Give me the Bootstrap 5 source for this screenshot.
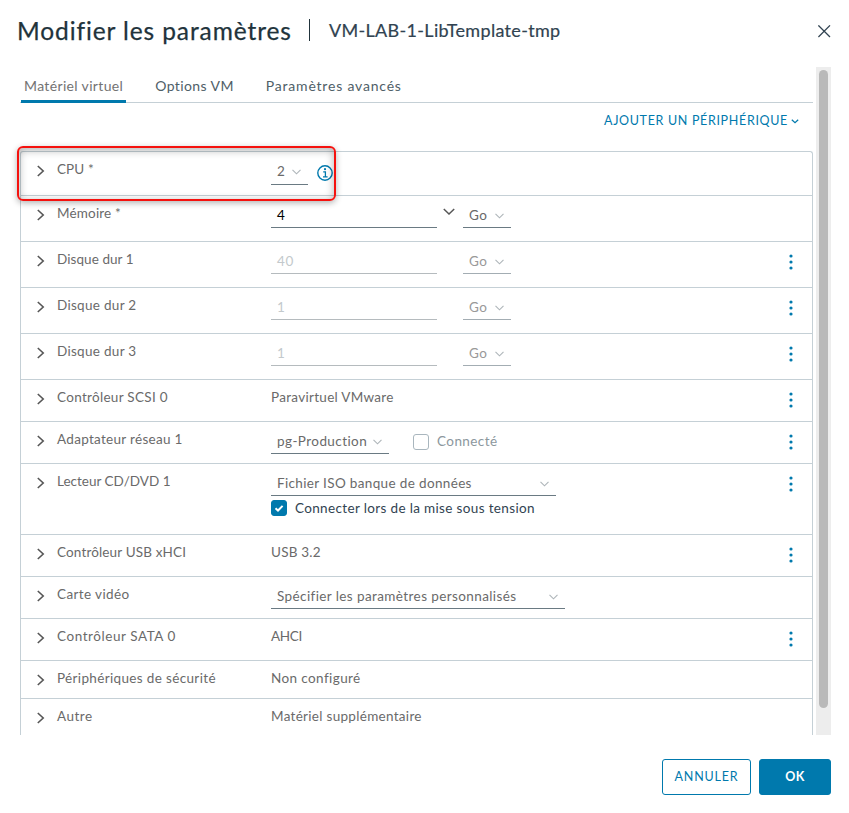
<!DOCTYPE html>
<html lang="fr">
<head>
<meta charset="utf-8">
<meta name="viewport" content="width=device-width, initial-scale=1">
<title>Modifier les paramètres</title>
<link rel="stylesheet" href="https://cdn.jsdelivr.net/npm/bootstrap@5.3.0/dist/css/bootstrap.min.css">
<style>
body{font-family:Lato,"Liberation Sans",sans-serif;font-size:13.5px;line-height:20px;color:#6a6a6a;background:#fff;overflow:hidden}
svg{display:block;fill:none;flex:none}
.dialog{width:849px;height:813px}
.dlg-head{height:67px;padding:0 18px 0 17px;color:#21333b}
.dlg-title{font-size:24.5px;line-height:30px;letter-spacing:.9px;margin:0;width:292px;padding-top:16px;font-weight:400;-webkit-text-stroke:.25px}
.dlg-sep{width:1px;height:22px;margin-top:19px;background:#21333b}
.dlg-vm{font-size:18px;line-height:24px;margin:18px 0 0 19px;letter-spacing:.32px;color:#314351;-webkit-text-stroke:.2px}
.dlg-close{margin-top:25px;border:0;background:none;padding:0}
.dlg-body{height:668px;padding-left:20px}
.pane{width:793px}
.tabs{height:36px;border-bottom:1px solid #c5d0d6;font-size:14px;padding-left:1px;gap:26px}
.tabs .nav-link{color:#4f6068;padding:9px 3px 0;height:36px;white-space:nowrap;border:0;border-bottom:3px solid transparent}
.tabs .nav-link.active{color:#737373;border-color:#0079ad}
.add-device{height:48px;padding:8px 13px 0 0;font-size:12.5px;color:#0079ad;gap:2px}
.add-device svg{margin:8px 1px 0 1px}
.devices{height:584px;border:1px solid #c5d0d6;border-width:1px 1px 0;border-radius:3px 3px 0 0}
.device{border-top:1px solid #c5d0d6;height:42px;padding-left:16px}
.device:first-child{border-top:0;height:43px}
.device.tall{height:46px}.device.cd{height:71px}.device.short{height:38px}
.caret{margin-top:13px}
.name{width:214px;margin-left:12px;padding-top:7px}
.value{padding-top:7px}
.pick{height:32px;padding:9px 7px 0 6px;border-bottom:1px solid #6a7a83;white-space:nowrap}
.first .pick{height:33px}
.pick svg{margin-top:8px;stroke:#aeb5b9}
.pick.off{color:#999;border-color:#a3adb3}
.w-cpu{width:37px}.w-go{width:48px}.w-net{width:118px}.w-iso{width:285px}.w-gpu{width:294px}
.num{width:166px;height:32px;padding:9px 6px 0;border-bottom:1px solid #6a7a83;color:#000}
.num.off{color:#c3c9cc;border-color:#b5bbbe}
.num-arrow{width:26px;padding:12px 0 0 6px}
.tick{width:16px;height:16px;border:1px solid #a9b6be;border-radius:3px}
.tick.on{background:#0079ad;border-color:#0079ad}
.net-check{padding-top:9px}
.net-check .tick{margin-top:3px}
.muted-label{color:#8c979d}
.boot-label{color:#314351;margin-top:-2px}
.kebab{margin:12px 19px 0 auto;fill:#0079ad}
.info{margin:13px 0 0 9px}
.callout-box{position:absolute;left:-3px;top:79px;width:319px;height:55px;border:2px solid #f5110e;border-radius:6px;box-shadow:0 2px 6px rgba(0,0,0,.3),inset 0 2px 8px rgba(0,0,0,.32)}
.track{width:15px;margin-left:3px;padding:3px 3px 0;background:#ededed}
.thumb{height:638px;border-radius:5px;background:#b9b9b9}
.dlg-foot{padding:24px 18px 0 0;gap:8px}
.dlg-foot .btn{height:36px;font-size:12.5px;line-height:20px;border-radius:3px;padding:7px 0;border-color:#0079ad;color:#0079ad}
.dlg-foot .cancel{width:89px}.dlg-foot .ok{width:72px;background:#0079ad;color:#fff;font-weight:700}
.s-15{letter-spacing:-.3px}.s0{letter-spacing:0}.s5{letter-spacing:.07px}.s10{letter-spacing:.1px}.s15{letter-spacing:.17px}.s20{letter-spacing:.15px}.s25{letter-spacing:.2px}.s30{letter-spacing:.3px}.s35{letter-spacing:.3px}.s40{letter-spacing:.35px}.s45{letter-spacing:.4px}.s50{letter-spacing:.42px}.s60{letter-spacing:.56px}.s70{letter-spacing:.5px}.s75{letter-spacing:.67px}.s80{letter-spacing:.8px}
</style>
</head>
<body>
<svg width="0" height="0" class="position-absolute">
<symbol id="right" viewBox="0 0 8 12"><path d="M.8 1l5.400 5L.8 11" stroke="#565656" stroke-width="1.6"/></symbol>
<symbol id="down" viewBox="0 0 9 6"><path d="M.5 .8l4 4 4-4" stroke-width="1.1"/></symbol>
<symbol id="dots" viewBox="0 0 4 16"><circle cx="2" cy="2" r="1.6"/><circle cx="2" cy="8" r="1.6"/><circle cx="2" cy="14" r="1.6"/></symbol>
</svg>
<main class="dialog d-flex flex-column">
<header class="dlg-head d-flex align-items-start">
<h1 class="dlg-title text-nowrap">Modifier les paramètres</h1><span class="dlg-sep"></span><span class="dlg-vm">VM-LAB-1-LibTemplate-tmp</span>
<button class="dlg-close ms-auto" aria-label="Fermer"><svg width="13" height="13"><path d="M.4 .4l11.600 11.600M12 .4L.4 12" stroke="#314351" stroke-width="1.3"/></svg></button>
</header>
<section class="dlg-body d-flex">
<div class="pane position-relative">
<nav class="nav tabs flex-nowrap"><a class="nav-link active s40">Matériel virtuel</a><a class="nav-link s45">Options VM</a><a class="nav-link s80">Paramètres avancés</a></nav>
<div class="add-device d-flex justify-content-end"><span class="s75">AJOUTER UN PÉRIPHÉRIQUE</span><svg width="8" height="5"><path d="M.8 .8L4 3.8 7.200 .8" stroke="#0079ad" stroke-width="1.2"/></svg></div>
<div class="devices">
<div class="device first d-flex align-items-start"><svg class="caret" width="8" height="12"><use href="#right"/></svg><div class="name s10">CPU *</div><div class="pick w-cpu d-flex justify-content-between"><span>2</span><svg width="9" height="6"><use href="#down"/></svg></div><svg class="info" width="16" height="16"><circle cx="8" cy="8" r="7.2" stroke="#0079ad" stroke-width="1.4"/><path d="M6.2 6.900H8.400V11.600M6 11.800h4.600" stroke="#0079ad" stroke-width="1.3"/><circle cx="8" cy="4.200" r="1.100" fill="#0079ad"/></svg></div>
<div class="device tall d-flex align-items-start"><svg class="caret" width="8" height="12"><use href="#right"/></svg><div class="name s15">Mémoire *</div><div class="num">4</div><div class="num-arrow"><svg width="12" height="8"><path d="M.8 1L6 6l5.200-5" stroke="#565656" stroke-width="1.5"/></svg></div><div class="pick w-go d-flex justify-content-between"><span class="s60">Go</span><svg width="9" height="6"><use href="#down"/></svg></div></div>
<div class="device tall d-flex align-items-start"><svg class="caret" width="8" height="12"><use href="#right"/></svg><div class="name s5">Disque dur 1</div><div class="num off s60">40</div><div class="num-arrow"></div><div class="pick off w-go d-flex justify-content-between"><span class="s60">Go</span><svg width="9" height="6"><use href="#down"/></svg></div><svg class="kebab" width="4" height="16"><use href="#dots"/></svg></div>
<div class="device tall d-flex align-items-start"><svg class="caret" width="8" height="12"><use href="#right"/></svg><div class="name s30">Disque dur 2</div><div class="num off">1</div><div class="num-arrow"></div><div class="pick off w-go d-flex justify-content-between"><span class="s60">Go</span><svg width="9" height="6"><use href="#down"/></svg></div><svg class="kebab" width="4" height="16"><use href="#dots"/></svg></div>
<div class="device tall d-flex align-items-start"><svg class="caret" width="8" height="12"><use href="#right"/></svg><div class="name s30">Disque dur 3</div><div class="num off">1</div><div class="num-arrow"></div><div class="pick off w-go d-flex justify-content-between"><span class="s60">Go</span><svg width="9" height="6"><use href="#down"/></svg></div><svg class="kebab" width="4" height="16"><use href="#dots"/></svg></div>
<div class="device d-flex align-items-start"><svg class="caret" width="8" height="12"><use href="#right"/></svg><div class="name s35">Contrôleur SCSI 0</div><div class="value s35">Paravirtuel VMware</div><svg class="kebab" width="4" height="16"><use href="#dots"/></svg></div>
<div class="device d-flex align-items-start"><svg class="caret" width="8" height="12"><use href="#right"/></svg><div class="name s30">Adaptateur réseau 1</div><div class="pick w-net d-flex justify-content-between"><span class="s50">pg-Production</span><svg width="9" height="6"><use href="#down"/></svg></div><div class="net-check d-flex gap-2 ms-4"><span class="tick"></span><span class="s50 muted-label">Connecté</span></div><svg class="kebab" width="4" height="16"><use href="#dots"/></svg></div>
<div class="device cd d-flex align-items-start"><svg class="caret" width="8" height="12"><use href="#right"/></svg><div class="name s0">Lecteur CD/DVD 1</div><div><div class="pick w-iso d-flex justify-content-between"><span class="s40">Fichier ISO banque de données</span><svg width="9" height="6"><use href="#down"/></svg></div><div class="d-flex gap-2 pt-1"><span class="tick on"><svg width="14" height="14"><path d="M3.500 7.200l2.500 2.300 4.600-4.600" stroke="#fff" stroke-width="2"/></svg></span><span class="s40 boot-label">Connecter lors de la mise sous tension</span></div></div><svg class="kebab" width="4" height="16"><use href="#dots"/></svg></div>
<div class="device d-flex align-items-start"><svg class="caret" width="8" height="12"><use href="#right"/></svg><div class="name s20">Contrôleur USB xHCI</div><div class="value s25">USB 3.2</div><svg class="kebab" width="4" height="16"><use href="#dots"/></svg></div>
<div class="device d-flex align-items-start"><svg class="caret" width="8" height="12"><use href="#right"/></svg><div class="name s45">Carte vidéo</div><div class="pick w-gpu d-flex justify-content-between"><span class="s45">Spécifier les paramètres personnalisés</span><svg width="9" height="6"><use href="#down"/></svg></div></div>
<div class="device d-flex align-items-start"><svg class="caret" width="8" height="12"><use href="#right"/></svg><div class="name s60">Contrôleur SATA 0</div><div class="value s-15">AHCI</div><svg class="kebab" width="4" height="16"><use href="#dots"/></svg></div>
<div class="device short d-flex align-items-start"><svg class="caret" width="8" height="12"><use href="#right"/></svg><div class="name s40">Périphériques de sécurité</div><div class="value s45">Non configuré</div></div>
<div class="device short d-flex align-items-start"><svg class="caret" width="8" height="12"><use href="#right"/></svg><div class="name s70">Autre</div><div class="value s30">Matériel supplémentaire</div></div>
</div>
<div class="callout-box"></div>
</div>
<div class="track"><div class="thumb"></div></div>
</section>
<footer class="dlg-foot d-flex justify-content-end"><button class="btn cancel s80">ANNULER</button><button class="btn ok s30">OK</button></footer>
</main>
</body>
</html>
